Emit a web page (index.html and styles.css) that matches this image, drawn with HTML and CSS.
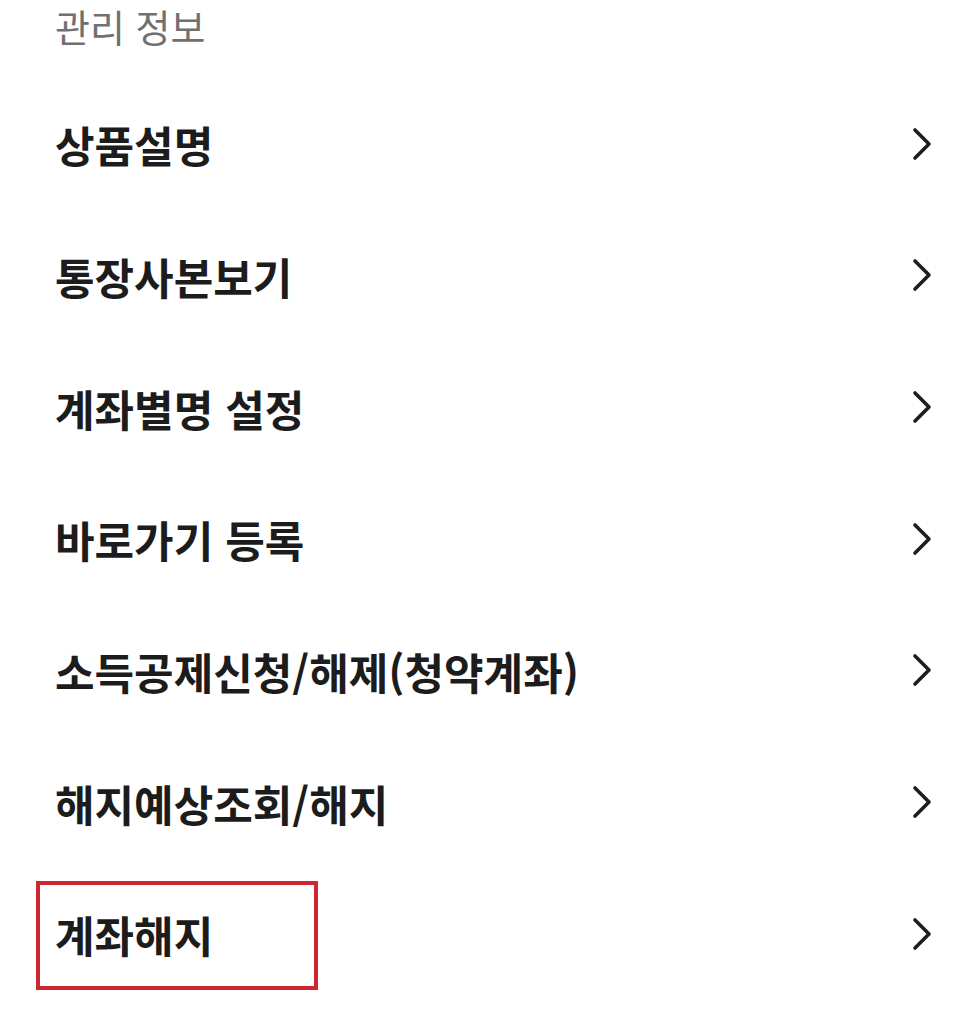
FILE: index.html
```html
<!DOCTYPE html>
<html lang="ko">
<head>
<meta charset="utf-8">
<link rel="stylesheet" href="styles.css">
</head>
<body>
<div class="page">
  <div class="section-title">관리 정보</div>
  <ul class="menu">
    <li class="row"><span class="label">상품설명</span><svg class="chev" viewBox="0 0 20 34"><path d="M3 3 L17 17 L3 31"/></svg></li>
    <li class="row"><span class="label">통장사본보기</span><svg class="chev" viewBox="0 0 20 34"><path d="M3 3 L17 17 L3 31"/></svg></li>
    <li class="row"><span class="label">계좌별명 설정</span><svg class="chev" viewBox="0 0 20 34"><path d="M3 3 L17 17 L3 31"/></svg></li>
    <li class="row"><span class="label">바로가기 등록</span><svg class="chev" viewBox="0 0 20 34"><path d="M3 3 L17 17 L3 31"/></svg></li>
    <li class="row"><span class="label">소득공제신청/해제(청약계좌)</span><svg class="chev" viewBox="0 0 20 34"><path d="M3 3 L17 17 L3 31"/></svg></li>
    <li class="row"><span class="label">해지예상조회/해지</span><svg class="chev" viewBox="0 0 20 34"><path d="M3 3 L17 17 L3 31"/></svg></li>
    <li class="row highlighted"><span class="label">계좌해지</span><svg class="chev" viewBox="0 0 20 34"><path d="M3 3 L17 17 L3 31"/></svg><span class="mark"></span></li>
  </ul>
</div>
</body>
</html>
```

FILE: styles.css
```css
html, body {
  margin: 0;
  padding: 0;
  background: #ffffff;
}
.page {
  width: 970px;
  height: 1024px;
  overflow: hidden;
  font-family: "Noto Sans CJK KR", "Noto Sans", sans-serif;
}
.section-title {
  height: 79px;
  box-sizing: border-box;
  padding-top: 5px;
  padding-left: 55px;
  font-size: 38px;
  line-height: 42px;
  color: #707070;
  font-weight: 400;
}
.menu {
  list-style: none;
  margin: 0;
  padding: 0;
}
.row {
  position: relative;
  height: 131.67px;
  display: flex;
  align-items: center;
  justify-content: space-between;
  padding-left: 55px;
  padding-right: 38px;
}
.label {
  font-size: 43px;
  font-weight: 700;
  color: #1c1c1c;
  letter-spacing: 0;
  line-height: 1;
}
.chev {
  width: 20px;
  height: 34px;
  margin-top: -2px;
}
.chev path {
  fill: none;
  stroke: #1e1e1e;
  stroke-width: 3.6;
  stroke-linecap: round;
  stroke-linejoin: round;
}
.mark {
  position: absolute;
  left: 36px;
  top: 12px;
  width: 282px;
  height: 109px;
  box-sizing: border-box;
  border: 4px solid #d0262f;
}
```
